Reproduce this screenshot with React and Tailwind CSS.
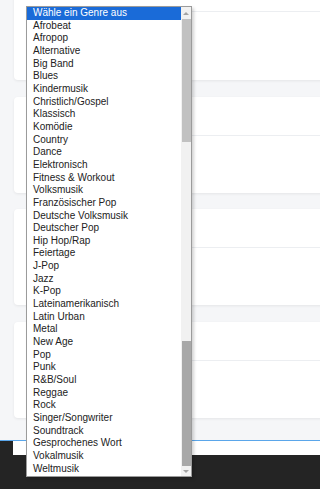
import React from "react";

const items = [
  "Afrobeat","Afropop","Alternative","Big Band","Blues","Kindermusik","Christlich/Gospel","Klassisch","Komödie","Country","Dance","Elektronisch","Fitness & Workout","Volksmusik","Französischer Pop","Deutsche Volksmusik","Deutscher Pop","Hip Hop/Rap","Feiertage","J-Pop","Jazz","K-Pop","Lateinamerikanisch","Latin Urban","Metal","New Age","Pop","Punk","R&B/Soul","Reggae","Rock","Singer/Songwriter","Soundtrack","Gesprochenes Wort","Vokalmusik","Weltmusik",
];

function Card({ lineTop, className }) {
  return (
    <div className={"mr-[-10px] h-[96px] bg-white rounded-[4px] shadow-[0_1px_3px_rgba(0,0,0,0.07)] flex flex-col " + className}>
      <div className={lineTop} />
      <div className="ml-[20px] border-t border-[#eceef1]" />
    </div>
  );
}

export default function App() {
  return (
    <div className="relative w-full h-[489px] overflow-hidden bg-[#f5f6f8]" style={{ fontFamily: '"Liberation Sans", Arial, sans-serif' }}>
      <div className="flex flex-col pl-[14px]">
        <Card className="mt-[-16px]" lineTop="h-[27px]" />
        <Card className="mt-[17px]" lineTop="h-[38px]" />
        <Card className="mt-[16px]" lineTop="h-[38px]" />
        <Card className="mt-[17px]" lineTop="h-[38px]" />
      </div>
      <div className="mt-[22px] border-t border-[#5aa6ea] bg-[#242424] h-[100px]">
        <div className="ml-[13px] h-[14px] bg-white" />
      </div>

      <div className="absolute left-[26px] top-[6px] w-[166px] h-[471px] border border-[#9b9b9b] bg-white shadow-[2px_2px_3px_rgba(0,0,0,0.18)] flex text-[10px] text-[#222]">
        <div className="flex-1 flex flex-col">
          <div className="h-[12.67px] leading-[12.67px] pl-[6px] bg-[#1a6bd8] text-white whitespace-nowrap">Wähle ein Genre aus</div>
          {items.map((t) => (
            <div key={t} className="h-[12.67px] leading-[12.67px] pl-[6px] whitespace-nowrap">{t}</div>
          ))}
        </div>
        <div className="w-[10px] bg-[#f1f1f1] flex flex-col">
          <div className="h-[12px] flex items-center justify-center">
            <div className="w-0 h-0 border-l-[3px] border-r-[3px] border-b-[3px] border-l-transparent border-r-transparent border-b-[#a3a3a3]" />
          </div>
          <div className="h-[123px] ml-[1px] bg-[#c1c1c1]" />
          <div className="h-[199px]" />
          <div className="h-[125px] ml-[1px] bg-[#a8a8a8]" />
          <div className="flex-1 flex items-center justify-center">
            <div className="w-0 h-0 border-l-[3px] border-r-[3px] border-t-[3px] border-l-transparent border-r-transparent border-t-[#a3a3a3]" />
          </div>
        </div>
      </div>
    </div>
  );
}
